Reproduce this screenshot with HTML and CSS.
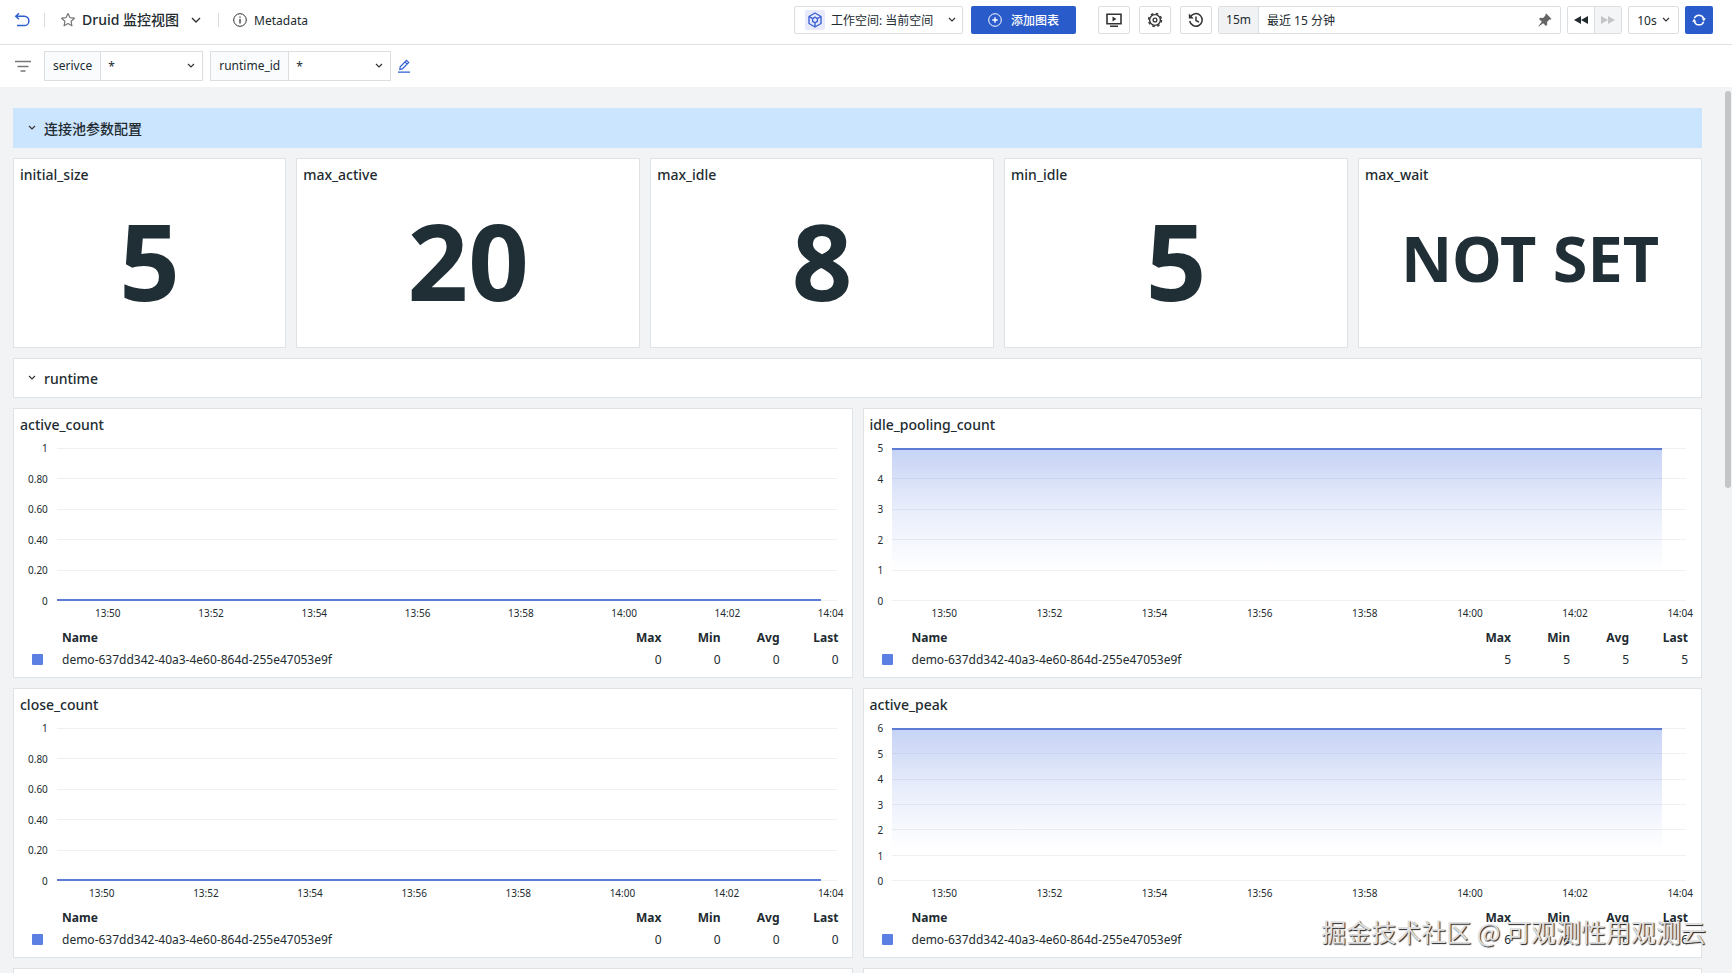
FILE: index.html
```html
<!DOCTYPE html>
<html lang="zh-CN">
<head>
    <meta charset="UTF-8">
    <meta name="viewport" content="width=device-width, initial-scale=1.0">
    <title>Druid 监控视图</title>
    <link rel="stylesheet" href="styles.css">
</head>
<body>
    <header class="header">
        <button class="icon-btn back" aria-label="返回">
            <svg width="16" height="16" viewBox="0 0 16 16" fill="none" stroke="#2f5fd0" stroke-width="1.5"><path d="M5 1.2 1.8 4.2 5 7.2M2 4.2h8.2a4.3 4.3 0 0 1 0 9.4H3"/></svg>
        </button>
        <span class="divider"></span>
        <button class="icon-btn star" aria-label="收藏">
            <svg width="16" height="16" viewBox="0 0 16 16" fill="none" stroke="#777" stroke-width="1.2" stroke-linejoin="round"><path d="m8 1.5 1.9 4.1 4.5.6-3.3 3.1.8 4.5L8 11.6l-3.9 2.2.8-4.5L1.6 6.2l4.5-.6z"/></svg>
        </button>
        <button class="view-name">Druid 监控视图
            <svg width="10" height="6" viewBox="0 0 10 6" fill="none" stroke="#333" stroke-width="1.4"><path d="m1 1 4 4 4-4"/></svg>
        </button>
        <span class="divider"></span>
        <a href="#" class="metadata">
            <svg width="14" height="14" viewBox="0 0 14 14" fill="none" stroke="#333"><circle cx="7" cy="7" r="6.3"/><path stroke-width="1.3" d="M7 6v4.5M7 3.5v1.3"/></svg>
            Metadata
        </a>

        <div class="tools">
            <button class="box workspace">
                <span class="cube">
                    <svg width="16" height="16" viewBox="0 0 16 16" fill="none" stroke="#3f61d3" stroke-width="1.4" stroke-linejoin="round"><path d="m8 1 6 3.5v7L8 15l-6-3.5v-7zM2 4.5l3.6 2.1M14 4.5l-3.6 2.1M8 15v-4.2M8 5.2l2.4 1.4v2.8L8 10.8 5.6 9.4V6.6z"/></svg>
                </span>
                <span>工作空间: 当前空间</span>
                <svg class="end" width="8" height="6" viewBox="0 0 8 6" fill="none" stroke="#333" stroke-width="1.2"><path d="m1 1 3 3 3-3"/></svg>
            </button>
            <button class="add">
                <svg width="14" height="14" viewBox="0 0 14 14" fill="none" stroke="#fff"><circle cx="7" cy="7" r="6.3"/><path stroke-width="1.4" d="M7 4.3v5.4M4.3 7h5.4"/></svg>
                添加图表
            </button>
            <button class="box square" aria-label="全屏">
                <svg width="16" height="16" viewBox="0 0 16 16" fill="none" stroke="#333" stroke-width="1.6"><path d="M1 2.3h14v9.4H1zM4 14.3h8"/><path d="m6.5 4.5 4 2.5-4 2.5z" fill="#333" stroke="none"/></svg>
            </button>
            <button class="box square" aria-label="设置">
                <svg width="16" height="16" viewBox="0 0 16 16" fill="none" stroke="#333"><circle cx="8" cy="8" r="5.4" stroke-width="1.4"/><circle cx="8" cy="8" r="6.5" stroke-width="1.4" stroke-dasharray="2.6 2.505"/><circle cx="8" cy="8" r="1.9" stroke-width="1.3"/></svg>
            </button>
            <button class="box square" aria-label="历史">
                <svg width="16" height="16" viewBox="0 0 16 16" fill="none" stroke="#333" stroke-width="1.5"><path d="M2.3 5A6.3 6.3 0 1 1 1.7 9M8 4.5v4l3 1.6"/><path d="M.8 1.500v5h5z" fill="#333" stroke="none"/></svg>
            </button>
            <div class="box range">
                <label for="range">15m</label>
                <input id="range" type="text" value="最近 15 分钟" readonly>
                <svg width="14" height="14" viewBox="0 0 14 14" fill="#666"><path d="m8.200.6 5.200 5.200-1.200.9-.8-.1-2.300 2.300.1 2.800-1.300 1.200-2.700-2.700L.8 13.400l-.3-.3 3.300-4.300L1 6l1.200-1.200 2.900.1 2.300-2.300-.1-.8z"/></svg>
            </div>
            <div class="box step">
                <button aria-label="后退"><svg width="14" height="10" viewBox="0 0 14 10" fill="#222b30"><path d="M7 1v8L0 5zM14 1v8L7 5z"/></svg></button>
                <button aria-label="前进" disabled><svg width="14" height="10" viewBox="0 0 14 10" fill="#c3c5c7"><path d="M0 1v8l7-4zM7 1v8l7-4z"/></svg></button>
            </div>
            <button class="box interval">10s
                <svg width="8" height="6" viewBox="0 0 8 6" fill="none" stroke="#333" stroke-width="1.2"><path d="m1 1 3 3 3-3"/></svg>
            </button>
            <button class="refresh" aria-label="刷新">
                <svg width="14" height="14" viewBox="0 0 14 14" fill="none" stroke="#fff" stroke-width="1.5"><path d="M2.3 5.3a5 5 0 0 1 9.3 0M11.7 8.7a5 5 0 0 1-9.3 0"/><path d="M13.8 5 12 8.3 9.6 5.6zM.2 9 2 5.7l2.4 2.7z" fill="#fff" stroke="none"/></svg>
            </button>
        </div>
    </header>

    <div class="filters">
        <svg class="filter-icon" width="16" height="12" viewBox="0 0 16 12" stroke="#777" stroke-width="1.6"><path d="M0 1.500h16M2.500 6.500h11M5.500 11h5"/></svg>
        <div class="filter">
            <label for="service">serivce</label>
            <select id="service"><option>*</option></select>
        </div>
        <div class="filter">
            <label for="runtime">runtime_id</label>
            <select id="runtime"><option>*</option></select>
        </div>
        <button class="icon-btn edit" aria-label="编辑">
            <svg width="12" height="14" viewBox="0 0 12 14" fill="none" stroke="#2f5fd0" stroke-width="1.2"><path d="M0 13.2h12M1.8 10.5l.4-2.7L8.500 1.300l2.200 2.100-6.400 6.500zM7 2.900 9.100 5"/></svg>
        </button>
    </div>

    <main class="board">
        <button class="group group-active">
            <svg width="8" height="6" viewBox="0 0 8 6" fill="none" stroke="#333" stroke-width="1.2"><path d="m1 1 3 3 3-3"/></svg>
            连接池参数配置
        </button>
        <section class="card stat stat-first"><h3>initial_size</h3><div class="value">5</div></section>
        <section class="card stat"><h3>max_active</h3><div class="value">20</div></section>
        <section class="card stat"><h3>max_idle</h3><div class="value">8</div></section>
        <section class="card stat"><h3>min_idle</h3><div class="value">5</div></section>
        <section class="card stat"><h3>max_wait</h3><div class="value value-text">NOT SET</div></section>

        <button class="group">
            <svg width="8" height="6" viewBox="0 0 8 6" fill="none" stroke="#333" stroke-width="1.2"><path d="m1 1 3 3 3-3"/></svg>
            runtime
        </button>

        <section class="card chart">
            <h3>active_count</h3>
            <div class="graph">
                <div class="y-axis"><span>1</span><span>0.80</span><span>0.60</span><span>0.40</span><span>0.20</span><span>0</span></div>
                <div class="plot">
                    <div class="lines"><i></i><i></i><i></i><i></i><i></i><i></i></div>
                    <div class="series series-zero"></div>
                </div>
            </div>
            <div class="x-axis x-active"><span>13:50</span><span>13:52</span><span>13:54</span><span>13:56</span><span>13:58</span><span>14:00</span><span>14:02</span><span>14:04</span></div>
            <table class="legend">
                <tr><th></th><th>Name</th><th>Max</th><th>Min</th><th>Avg</th><th>Last</th></tr>
                <tr><td><span class="swatch"></span></td><td>demo-637dd342-40a3-4e60-864d-255e47053e9f</td><td>0</td><td>0</td><td>0</td><td>0</td></tr>
            </table>
        </section>

        <section class="card chart">
            <h3>idle_pooling_count</h3>
            <div class="graph">
                <div class="y-axis"><span>5</span><span>4</span><span>3</span><span>2</span><span>1</span><span>0</span></div>
                <div class="plot">
                    <div class="lines"><i></i><i></i><i></i><i></i><i></i><i></i></div>
                    <div class="series series-full"></div>
                </div>
            </div>
            <div class="x-axis"><span>13:50</span><span>13:52</span><span>13:54</span><span>13:56</span><span>13:58</span><span>14:00</span><span>14:02</span><span>14:04</span></div>
            <table class="legend">
                <tr><th></th><th>Name</th><th>Max</th><th>Min</th><th>Avg</th><th>Last</th></tr>
                <tr><td><span class="swatch"></span></td><td>demo-637dd342-40a3-4e60-864d-255e47053e9f</td><td>5</td><td>5</td><td>5</td><td>5</td></tr>
            </table>
        </section>

        <section class="card chart">
            <h3>close_count</h3>
            <div class="graph">
                <div class="y-axis"><span>1</span><span>0.80</span><span>0.60</span><span>0.40</span><span>0.20</span><span>0</span></div>
                <div class="plot">
                    <div class="lines"><i></i><i></i><i></i><i></i><i></i><i></i></div>
                    <div class="series series-zero"></div>
                </div>
            </div>
            <div class="x-axis x-close"><span>13:50</span><span>13:52</span><span>13:54</span><span>13:56</span><span>13:58</span><span>14:00</span><span>14:02</span><span>14:04</span></div>
            <table class="legend">
                <tr><th></th><th>Name</th><th>Max</th><th>Min</th><th>Avg</th><th>Last</th></tr>
                <tr><td><span class="swatch"></span></td><td>demo-637dd342-40a3-4e60-864d-255e47053e9f</td><td>0</td><td>0</td><td>0</td><td>0</td></tr>
            </table>
        </section>

        <section class="card chart">
            <h3>active_peak</h3>
            <div class="graph">
                <div class="y-axis"><span>6</span><span>5</span><span>4</span><span>3</span><span>2</span><span>1</span><span>0</span></div>
                <div class="plot">
                    <div class="lines"><i></i><i></i><i></i><i></i><i></i><i></i><i></i></div>
                    <div class="series series-full"></div>
                </div>
            </div>
            <div class="x-axis"><span>13:50</span><span>13:52</span><span>13:54</span><span>13:56</span><span>13:58</span><span>14:00</span><span>14:02</span><span>14:04</span></div>
            <table class="legend">
                <tr><th></th><th>Name</th><th>Max</th><th>Min</th><th>Avg</th><th>Last</th></tr>
                <tr><td><span class="swatch"></span></td><td>demo-637dd342-40a3-4e60-864d-255e47053e9f</td><td>6</td><td>6</td><td>6</td><td>6</td></tr>
            </table>
        </section>

        <section class="card chart"></section>
        <section class="card chart"></section>
        <div class="scroll-thumb"></div>
    </main>
    <div class="watermark">掘金技术社区 @ 可观测性用观测云</div>
</body>
</html>
```
FILE: styles.css
```css
* { box-sizing: border-box; }
body {
    margin: 0;
    height: 100vh;
    display: flex;
    flex-direction: column;
    overflow: hidden;
    position: relative;
    font-family: "Noto Sans", "Noto Sans CJK SC", sans-serif;
    font-size: 12px;
    color: #222b30;
    background: #fff;
}
button, input, select { font: inherit; color: inherit; }
button { padding: 0; border: none; background: none; cursor: pointer; }
svg { display: block; flex: none; }
h3 { margin: 0; font-size: 14px; font-weight: 500; line-height: 20px; }

/* top bar */
.header { flex: none; display: flex; align-items: center; height: 45px; padding: 0 19px 4px 14px; border-bottom: 1px solid #dfe2e4; }
.divider { width: 1px; height: 14px; background: #d9dcde; }
.star { margin: 0 6px 0 15px; }
.back { margin-right: 14px; }
.view-name { display: flex; align-items: center; gap: 12px; margin-right: 17px; font-size: 14px; font-weight: 500; line-height: 20px; }
.metadata { display: flex; align-items: center; gap: 7px; margin-left: 14px; color: inherit; text-decoration: none; }
.tools { display: flex; align-items: center; gap: 6px; margin-left: auto; }
.box { display: flex; align-items: center; height: 28px; border: 1px solid #dcdfe2; border-radius: 2px; background: #fff; }
.workspace { width: 169px; padding: 0 6px 0 10px; gap: 6px; margin-right: 2px; white-space: nowrap; }
.workspace .end { margin-left: auto; }
.cube { display: flex; align-items: center; justify-content: center; width: 20px; height: 20px; border-radius: 2px; background: #e6eafc; }
.add { display: flex; align-items: center; justify-content: center; gap: 9px; width: 105px; height: 28px; margin-right: 16px; border-radius: 2px; background: #2a5bcb; color: #fff; font-weight: 500; }
.square { justify-content: center; width: 32px; }
.square + .square { margin-left: 3px; }
.range { width: 343px; padding-right: 8px; }
.range label { width: 40px; line-height: 26px; text-align: center; background: #f1f2f4; border-right: 1px solid #dcdfe2; }
.range input { flex: 1; min-width: 0; padding: 0 8px; border: none; outline: none; background: none; }
.step { width: 55px; overflow: hidden; }
.step button { flex: 1; display: flex; align-items: center; justify-content: center; height: 26px; }
.step button:disabled { background: #f4f5f6; border-left: 1px solid #dcdfe2; }
.interval { justify-content: center; gap: 5px; width: 51px; }
.refresh { display: flex; align-items: center; justify-content: center; width: 28px; height: 28px; border-radius: 2px; background: #2a5bcb; }

/* variable filters */
.filters { flex: none; display: flex; align-items: center; height: 42px; padding-left: 15px; }
.filter-icon { margin-right: 13px; }
.filter { display: flex; height: 30px; margin-right: 7px; border: 1px solid #dcdfe2; }
.filter label { padding: 0 8px; line-height: 27px; background: #f9fbfd; border-right: 1px solid #dcdfe2; }
.filter select {
    appearance: none;
    width: 101px;
    padding: 0 7px;
    border: none;
    outline: none;
    background: url("data:image/svg+xml,%3Csvg xmlns='http://www.w3.org/2000/svg' width='8' height='6' fill='none' stroke='%23333' stroke-width='1.2'%3E%3Cpath d='m1 1 3 3 3-3'/%3E%3C/svg%3E") no-repeat right 7px center;
}

/* dashboard grid */
.board {
    flex: 1;
    min-height: 0;
    position: relative;
    overflow: hidden;
    display: grid;
    grid-template-columns: repeat(24, 1fr);
    grid-template-rows: 40px 190px 40px 270px 270px 270px;
    gap: 10px;
    padding: 21px 30px 0 13px;
    background: #f1f3f5;
}
.group { grid-column: span 24; display: flex; align-items: center; gap: 8px; padding: 0 14px; border: 1px solid #e0e3e6; background: #fff; font-size: 14px; font-weight: 500; }
.group-active { border-color: #cce5ff; background: #cce5ff; }
.card { min-width: 0; border: 1px solid #e0e3e6; background: #fff; }
.card h3 { padding: 6px 6px 0; }
.stat { grid-column: span 5; display: flex; flex-direction: column; }
.stat-first { grid-column: span 4; }
.value { flex: 1; display: flex; align-items: center; justify-content: center; padding-bottom: 12px; font-size: 106px; font-weight: 700; line-height: 110px; color: #202e36; }
.value-text { padding-bottom: 16px; font-size: 63px; }

.chart { grid-column: span 12; }
.graph { display: flex; gap: 9px; height: 165px; margin: 7px 15px 0 14px; }
.y-axis { display: flex; flex-direction: column; justify-content: space-between; font-size: 10px; line-height: 12px; text-align: right; }
.plot { flex: 1; display: grid; padding: 6px 0; }
.lines, .series { grid-area: 1 / 1; }
.lines { display: flex; flex-direction: column; justify-content: space-between; }
.lines i { height: 1px; background: #eff0f2; }
.series-zero { width: 98%; border-bottom: 2px solid #5b7bd5; }
.series-full { width: 97%; border-top: 2px solid #5b7bd5; background: linear-gradient(rgba(91, 127, 227, 0.34), rgba(91, 127, 227, 0.14) 38%, rgba(91, 127, 227, 0) 80%); }
.x-axis { display: flex; justify-content: space-between; margin: 0 8px 0 68px; font-size: 10px; line-height: 12px; }
.x-active { margin-left: 81px; }
.x-close { margin-left: 75px; }

.legend { width: 100%; margin-top: 7px; padding-right: 13px; border-spacing: 0; table-layout: fixed; }
.legend th, .legend td { width: 59px; height: 22px; padding: 0; text-align: right; }
.legend th:first-child { width: 48px; }
.legend td:first-child { padding-left: 18px; }
.legend th:nth-child(2) { width: auto; }
.legend th:nth-child(2), .legend td:nth-child(2) { text-align: left; }
.swatch { display: block; width: 11px; height: 11px; border-radius: 1px; background: #5b7fe3; }

/* overlays */
.scroll-thumb { position: absolute; top: 4px; right: 1px; width: 6px; height: 397px; border-radius: 3px; background: #c3c5c7; }
.watermark { position: absolute; right: 26px; bottom: 23px; font-family: "Noto Sans CJK SC", sans-serif; font-size: 25px; line-height: 38px; color: #dedede; text-shadow: 1px 1px 1px #222; pointer-events: none; }
```
